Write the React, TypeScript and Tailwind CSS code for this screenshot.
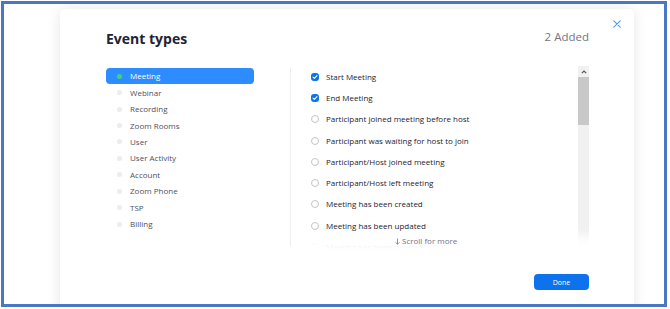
import React from 'react'

const categories = [
  'Meeting',
  'Webinar',
  'Recording',
  'Zoom Rooms',
  'User',
  'User Activity',
  'Account',
  'Zoom Phone',
  'TSP',
  'Billing',
]

const events = [
  { label: 'Start Meeting', checked: true },
  { label: 'End Meeting', checked: true },
  { label: 'Participant joined meeting before host', checked: false },
  { label: 'Participant was waiting for host to join', checked: false },
  { label: 'Participant/Host joined meeting', checked: false },
  { label: 'Participant/Host left meeting', checked: false },
  { label: 'Meeting has been created', checked: false },
  { label: 'Meeting has been updated', checked: false },
  { label: 'Meeting has been deleted', checked: false },
]

function CheckMark({ checked }: { checked: boolean }) {
  if (checked) {
    return (
      <span className="w-[8px] h-[8px] rounded-[3px] bg-[#0e72ed] flex items-center justify-center shrink-0">
        <svg width="6" height="6" viewBox="0 0 6 6" fill="none">
          <path d="M1 3.1 L2.4 4.4 L5 1.6" stroke="#fff" strokeWidth="1.1" strokeLinecap="round" strokeLinejoin="round" />
        </svg>
      </span>
    )
  }
  return <span className="w-[8px] h-[8px] rounded-full border border-[#c4c4cc] bg-white shrink-0" />
}

export default function App() {
  return (
    <div className="w-[670px] h-[309px] bg-white pt-px pl-px" style={{ fontFamily: '"Open Sans", "Liberation Sans", sans-serif' }}>
      <div className="w-[666px] h-[306px] border-[3px] border-[#4a77c4] overflow-hidden bg-white">
        <div className="relative ml-[56px] mt-[5px] w-[574px] h-[320px] bg-white rounded-[5px] shadow-[0_0_14px_rgba(0,0,0,0.10)]">
          <button className="absolute right-[13px] top-[11px] w-[8px] h-[8px] flex items-center justify-center">
            <svg width="8" height="8" viewBox="0 0 8 8" fill="none">
              <path d="M0.8 0.8 L7.2 7.2 M7.2 0.8 L0.8 7.2" stroke="#4a9cf7" strokeWidth="1.1" strokeLinecap="round" />
            </svg>
          </button>

          <div className="flex items-start justify-between pl-[46px] pr-[45px] pt-[20px]">
            <h2 className="text-[14px] leading-[20px] font-bold text-[#232333]">Event types</h2>
            <span className="text-[11.5px] leading-[20px] text-[#747487] -mt-[2px]">2 Added</span>
          </div>

          <div className="flex pl-[46px] pr-[45px] mt-[17px]">
            <div className="w-[148px] pt-[2px] flex flex-col">
              {categories.map((c, i) => (
                <div
                  key={c}
                  className={
                    i === 0
                      ? 'h-[16.45px] flex items-center rounded-[4px] bg-[#2d8cff] text-white'
                      : 'h-[16.45px] flex items-center text-[#4f4f5e]'
                  }
                >
                  <span
                    className={
                      i === 0
                        ? 'ml-[11px] w-[5px] h-[5px] rounded-full bg-[#3fd46f]'
                        : 'ml-[11px] w-[5px] h-[5px] rounded-full bg-[#ececf1]'
                    }
                  />
                  <span className="ml-[8px] text-[8px] leading-none">{c}</span>
                </div>
              ))}
            </div>

            <div className="ml-[36px] mt-[2px] w-px h-[178px] bg-[#ededf2]" />

            <div className="relative flex-1 ml-[9px] h-[184px] overflow-hidden flex">
              <div className="flex-1 flex flex-col">
                {events.map((e) => (
                  <div key={e.label} className="h-[21.3px] shrink-0 flex items-center">
                    <span className="ml-[11px] flex">
                      <CheckMark checked={e.checked} />
                    </span>
                    <span className="ml-[7px] text-[8px] leading-none text-[#232333]">{e.label}</span>
                  </div>
                ))}
              </div>

              <div className="w-[11px] h-[180px] bg-[#f1f1f1] flex flex-col items-center">
                <div className="h-[11px] flex items-center justify-center">
                  <svg width="6" height="4" viewBox="0 0 6 4" fill="none">
                    <path d="M0.8 3.2 L3 1 L5.2 3.2" stroke="#555" strokeWidth="1.1" />
                  </svg>
                </div>
                <div className="w-[11px] h-[48px] bg-[#c8c8c8]" />
              </div>

              <div className="absolute left-0 right-0 bottom-0 h-[20px] bg-gradient-to-b from-white/0 via-white/85 to-white" />
              <div className="absolute left-[95px] bottom-[5px] flex items-center gap-[2px] text-[8px] leading-none text-[#747487]">
                <svg width="5" height="7" viewBox="0 0 5 7" fill="none">
                  <path d="M2.5 0.5 V6.2 M0.6 4.3 L2.5 6.2 L4.4 4.3" stroke="#747487" strokeWidth="0.8" />
                </svg>
                <span>Scroll for more</span>
              </div>
            </div>
          </div>

          <div className="flex justify-end pr-[45px] mt-[24px]">
            <button className="w-[55px] h-[16px] rounded-[4px] bg-[#0e72ed] text-white text-[7px] leading-none">Done</button>
          </div>
        </div>
      </div>
    </div>
  )
}
